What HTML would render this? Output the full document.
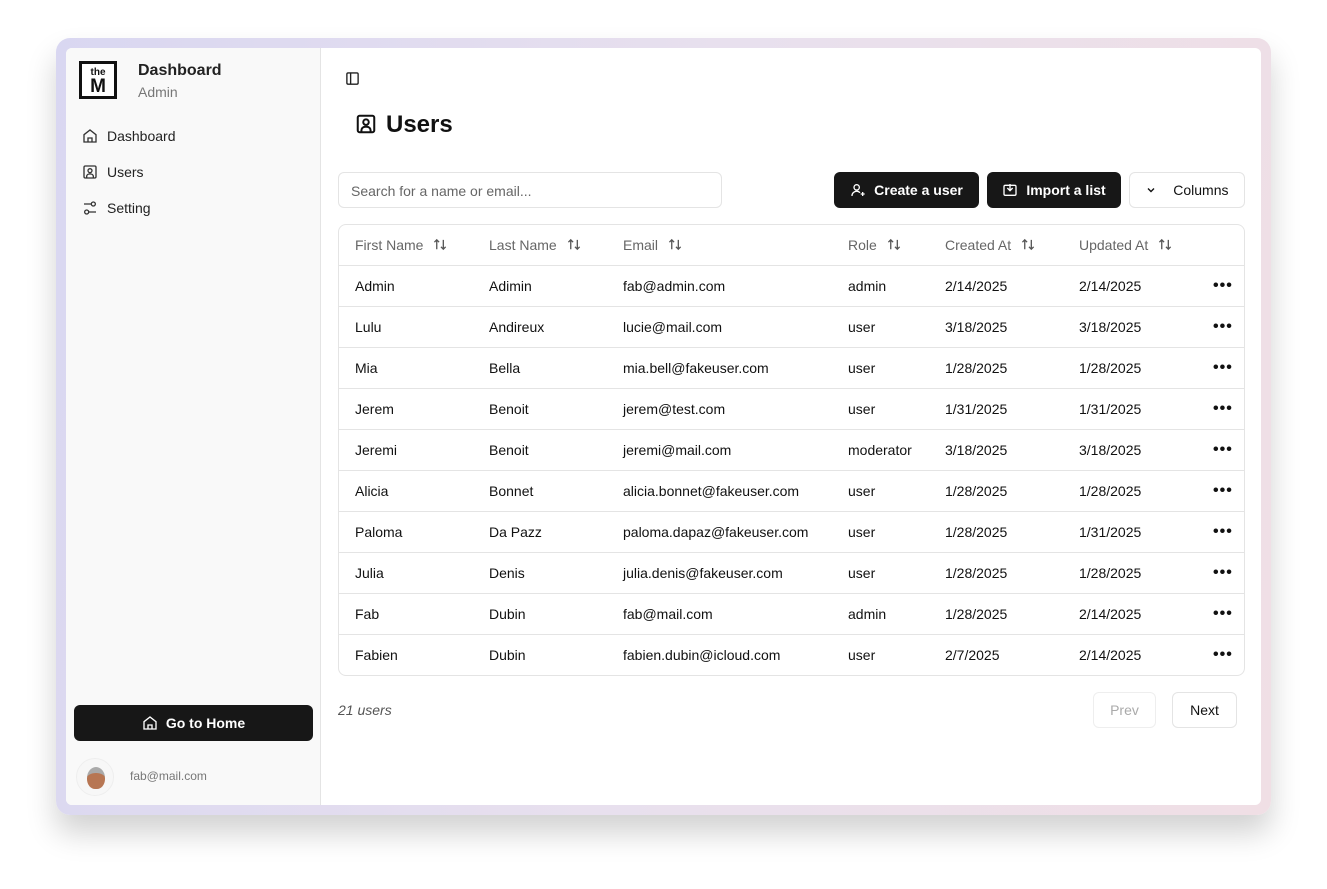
<!DOCTYPE html>
<html><head><style>
*{box-sizing:border-box;margin:0;padding:0}
body{width:1327px;height:889px;background:#fff;font-family:"Liberation Sans",sans-serif;position:relative;overflow:hidden;color:#111}
.frame{position:absolute;left:56px;top:38px;width:1215px;height:777px;border-radius:14px;background:linear-gradient(100deg,#d9d7f1,#e8e0ee 50%,#f0dfe5);box-shadow:0 18px 30px rgba(0,0,0,.18)}
.card{position:absolute;left:66px;top:48px;width:1195px;height:757px;border-radius:6px;background:#fff;overflow:hidden}
.side{position:absolute;left:0;top:0;width:255px;height:100%;background:#f9f9f9;border-right:1px solid #e4e4e4}
.abs{position:absolute}
.nav{position:absolute;left:16px;font-size:14px;color:#222;display:flex;align-items:center;gap:9px}
svg{display:block}
.btn{position:absolute;height:36px;border-radius:6px;font-size:14px;font-weight:bold;display:flex;align-items:center;justify-content:center;gap:8px}
.dark{background:#171717;color:#fff}
.light{background:#fff;border:1px solid #e4e4e4;color:#111}
table{position:absolute;left:272px;top:176px;width:907px;border:1px solid #e4e4e4;border-radius:8px;border-collapse:separate;border-spacing:0;font-size:14px}
td,th{height:41px;text-align:left;font-weight:normal;border-top:1px solid #e4e4e4;padding-left:16px;white-space:nowrap}
th{border-top:none;color:#666;height:40px}
th svg{display:inline-block;vertical-align:-2px;margin-left:10px}
.dots{font-weight:bold;letter-spacing:1px;font-size:16px}
</style></head><body>
<svg width="0" height="0" style="position:absolute"><symbol id="srt" viewBox="0 0 16 16"><path d="M4 13V3M1.5 5.5L4 3l2.5 2.5M11 3v10M8.5 10.5L11 13l2.5-2.5" fill="none" stroke="#555" stroke-width="1.4"/></symbol></svg>
<div class="frame"></div>
<div class="card">
 <div class="side">
  <div class="abs" style="left:13px;top:13px;width:38px;height:38px;border:3px solid #111;background:#fff;text-align:center;font-weight:bold;line-height:12px;padding-top:3px"><div style="font-size:10px">the</div><div style="font-size:19px;line-height:16px;font-weight:900">M</div></div>
  <div class="abs" style="left:72px;top:14px;font-size:16px;font-weight:bold;color:#222">Dashboard</div>
  <div class="abs" style="left:72px;top:36px;font-size:14px;color:#777">Admin</div>
  <div class="nav" style="top:80px"><svg width="16" height="16" viewBox="0 0 24 24" fill="none" stroke="#333" stroke-width="2"><path d="M3 10l9-7 9 7v11H3z"/><path d="M9 21v-6h6v6"/></svg>Dashboard</div>
  <div class="nav" style="top:116px"><svg width="16" height="16" viewBox="0 0 24 24" fill="none" stroke="#333" stroke-width="2"><rect x="3" y="3" width="18" height="18" rx="2"/><circle cx="12" cy="10" r="3"/><path d="M7 21v-2a4 4 0 0 1 4-4h2a4 4 0 0 1 4 4v2"/></svg>Users</div>
  <div class="nav" style="top:152px"><svg width="16" height="16" viewBox="0 0 24 24" fill="none" stroke="#333" stroke-width="2"><path d="M14 6H3M21 18H10"/><circle cx="17" cy="6" r="3"/><circle cx="7" cy="18" r="3"/></svg>Setting</div>
  <div class="btn dark" style="left:8px;top:657px;width:239px"><svg width="16" height="16" viewBox="0 0 24 24" fill="none" stroke="#fff" stroke-width="2"><path d="M3 10l9-7 9 7v11H3z"/><path d="M9 21v-6h6v6"/></svg>Go to Home</div>
  <div class="abs" style="left:10px;top:710px;width:38px;height:38px;border-radius:50%;border:1px solid #eee;background:#f7f7f7"><div style="position:absolute;left:10px;top:8px;width:18px;height:22px;border-radius:50% 50% 45% 45%;background:#b77653;border-top:6px solid #aaa"></div></div>
  <div class="abs" style="left:64px;top:721px;font-size:12px;color:#777">fab@mail.com</div>
 </div>
 <div class="abs" style="left:279px;top:23px"><svg width="15" height="15" viewBox="0 0 24 24" fill="none" stroke="#222" stroke-width="2.2"><rect x="3" y="3" width="18" height="18" rx="2"/><path d="M9 3v18"/></svg></div>
 <div class="abs" style="left:289px;top:65px"><svg width="22" height="22" viewBox="0 0 24 24" fill="none" stroke="#111" stroke-width="2.2"><rect x="3" y="3" width="18" height="18" rx="2"/><circle cx="12" cy="10" r="3"/><path d="M7 21v-2a4 4 0 0 1 4-4h2a4 4 0 0 1 4 4v2"/></svg></div>
 <div class="abs" style="left:320px;top:63px;font-size:24px;font-weight:bold">Users</div>
 <div class="abs" style="left:272px;top:124px;width:384px;height:36px;border:1px solid #e4e4e4;border-radius:6px;font-size:14px;color:#666;padding:10px 12px">Search for a name or email...</div>
 <div class="btn dark" style="left:768px;top:124px;width:145px"><svg width="16" height="16" viewBox="0 0 24 24" fill="none" stroke="#fff" stroke-width="2"><circle cx="10" cy="8" r="4"/><path d="M3 21a7 7 0 0 1 12-5M19 15v6M16 18h6"/></svg>Create a user</div>
 <div class="btn dark" style="left:921px;top:124px;width:134px"><svg width="16" height="16" viewBox="0 0 24 24" fill="none" stroke="#fff" stroke-width="2"><rect x="3" y="5" width="18" height="15" rx="2"/><path d="M12 3v10M8 9l4 4 4-4"/></svg>Import a list</div>
 <div class="btn light" style="left:1063px;top:124px;width:116px;font-weight:normal"><svg width="12" height="12" viewBox="0 0 12 12"><path d="M3 4.5l3 3 3-3" fill="none" stroke="#111" stroke-width="1.4"/></svg>&nbsp; Columns</div>
 <table>
  <tr><th style="width:134px">First Name<svg width="15" height="15"><use href="#srt"/></svg></th><th style="width:134px">Last Name<svg width="15" height="15"><use href="#srt"/></svg></th><th style="width:225px">Email<svg width="15" height="15"><use href="#srt"/></svg></th><th style="width:97px">Role<svg width="15" height="15"><use href="#srt"/></svg></th><th style="width:134px">Created At<svg width="15" height="15"><use href="#srt"/></svg></th><th style="width:134px">Updated At<svg width="15" height="15"><use href="#srt"/></svg></th><th></th></tr>
  <tr><td>Admin</td><td>Adimin</td><td>fab@admin.com</td><td>admin</td><td>2/14/2025</td><td>2/14/2025</td><td class="dots">•••</td></tr>
  <tr><td>Lulu</td><td>Andireux</td><td>lucie@mail.com</td><td>user</td><td>3/18/2025</td><td>3/18/2025</td><td class="dots">•••</td></tr>
  <tr><td>Mia</td><td>Bella</td><td>mia.bell@fakeuser.com</td><td>user</td><td>1/28/2025</td><td>1/28/2025</td><td class="dots">•••</td></tr>
  <tr><td>Jerem</td><td>Benoit</td><td>jerem@test.com</td><td>user</td><td>1/31/2025</td><td>1/31/2025</td><td class="dots">•••</td></tr>
  <tr><td>Jeremi</td><td>Benoit</td><td>jeremi@mail.com</td><td>moderator</td><td>3/18/2025</td><td>3/18/2025</td><td class="dots">•••</td></tr>
  <tr><td>Alicia</td><td>Bonnet</td><td>alicia.bonnet@fakeuser.com</td><td>user</td><td>1/28/2025</td><td>1/28/2025</td><td class="dots">•••</td></tr>
  <tr><td>Paloma</td><td>Da Pazz</td><td>paloma.dapaz@fakeuser.com</td><td>user</td><td>1/28/2025</td><td>1/31/2025</td><td class="dots">•••</td></tr>
  <tr><td>Julia</td><td>Denis</td><td>julia.denis@fakeuser.com</td><td>user</td><td>1/28/2025</td><td>1/28/2025</td><td class="dots">•••</td></tr>
  <tr><td>Fab</td><td>Dubin</td><td>fab@mail.com</td><td>admin</td><td>1/28/2025</td><td>2/14/2025</td><td class="dots">•••</td></tr>
  <tr><td>Fabien</td><td>Dubin</td><td>fabien.dubin@icloud.com</td><td>user</td><td>2/7/2025</td><td>2/14/2025</td><td class="dots">•••</td></tr>
 </table>
 <div class="abs" style="left:272px;top:654px;font-size:14px;font-style:italic;color:#555">21 users</div>
 <div class="btn light" style="left:1027px;top:644px;width:63px;font-weight:normal;color:#aaa;border-color:#eee">Prev</div>
 <div class="btn light" style="left:1106px;top:644px;width:65px;font-weight:normal">Next</div>
</div>
</body></html>
